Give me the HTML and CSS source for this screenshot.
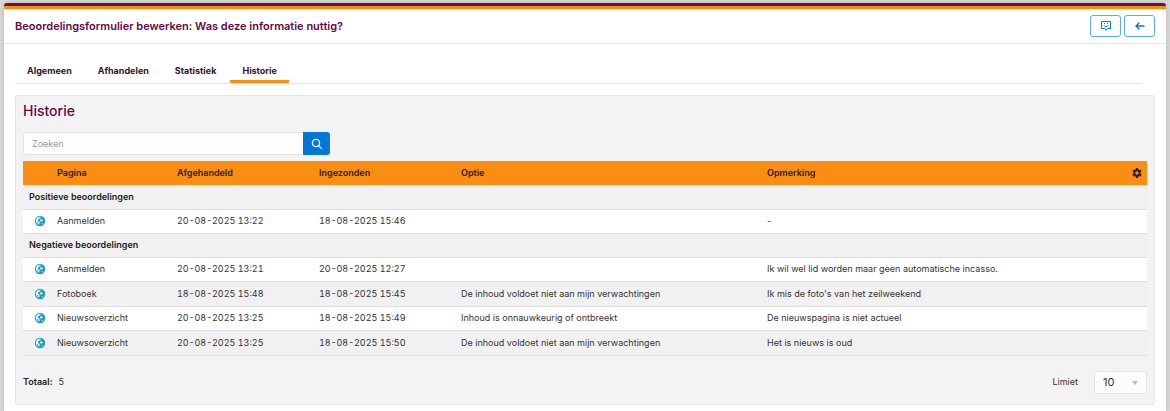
FILE: index.html
```html
<!DOCTYPE html>
<html lang="nl">
<head>
    <meta charset="UTF-8">
    <meta name="viewport" content="width=device-width, initial-scale=1.0">
    <title>Beoordelingsformulier bewerken</title>
    <link rel="stylesheet" href="styles.css">
</head>
<body>
    <!-- Shared icons -->
    <svg class="sprite" aria-hidden="true">
        <symbol id="globe" viewBox="0 0 12 12">
            <circle cx="6" cy="6" r="5.2" fill="#1c9dbd"/>
            <path d="M3.4 2.6C4.4 1.8 6 1.6 7 2L5.6 3.4 4.4 4.2 3.8 5.6 5 6.4 5.8 7.6 5.2 9.6C3 9.6 1.8 7.8 1.8 6 1.8 4.6 2.4 3.4 3.4 2.6Z" fill="#e4f4f8"/>
            <path d="M6 4.8L7.6 4 8.8 5.2 8.4 6.6 7.2 6.2 6.2 6.4ZM7.4 8.8L9.2 8.2 8.6 9.4Z" fill="#e4f4f8"/>
            <path d="M2.8 6.8L4.2 7.2 4.4 8.8 3.4 8.6Z" fill="#1c9dbd"/>
        </symbol>
    </svg>

    <div class="window">
        <header class="header">
            <h1>Beoordelingsformulier bewerken: Was deze informatie nuttig?</h1>
            <div class="actions">
                <button type="button" class="action" aria-label="Feedback">
                    <svg width="12" height="12" viewBox="0 0 12 12" fill="none" stroke="currentColor">
                        <path d="M1.5 1.5H10.5V8.5H7.4L6 10.4 4.6 8.5H1.5Z" stroke-linejoin="round"/>
                        <path d="M3.8 5.4C4.6 7 7.4 7 8.2 5.4"/>
                        <path d="M4.5 3V4.2M7.5 3V4.2"/>
                    </svg>
                </button>
                <button type="button" class="action" aria-label="Terug">
                    <svg width="12" height="12" viewBox="0 0 12 12" fill="none" stroke="currentColor" stroke-width="1.4" stroke-linecap="round" stroke-linejoin="round">
                        <path d="M10 6H2M5 3L2 6 5 9"/>
                    </svg>
                </button>
            </div>
        </header>

        <nav class="tabs">
            <a href="#algemeen">Algemeen</a>
            <a href="#afhandelen">Afhandelen</a>
            <a href="#statistiek">Statistiek</a>
            <a href="#historie" class="active">Historie</a>
        </nav>

        <section class="panel" id="historie">
            <h2>Historie</h2>
            <form class="search">
                <input type="text" placeholder="Zoeken" aria-label="Zoeken">
                <button type="button" aria-label="Zoek">
                    <svg width="12" height="12" viewBox="0 0 12 12" fill="none" stroke="currentColor" stroke-width="1.3" stroke-linecap="round">
                        <circle cx="5" cy="5" r="3.6"/>
                        <path d="M7.7 7.7L10.6 10.6"/>
                    </svg>
                </button>
            </form>

            <table>
                <colgroup>
                    <col class="col-icon">
                    <col class="col-page">
                    <col class="col-date">
                    <col class="col-date">
                    <col class="col-option">
                    <col>
                    <col class="col-settings">
                </colgroup>
                <thead>
                    <tr>
                        <th></th>
                        <th>Pagina</th>
                        <th>Afgehandeld</th>
                        <th>Ingezonden</th>
                        <th>Optie</th>
                        <th>Opmerking</th>
                        <th class="settings">
                            <svg width="10" height="10" viewBox="0 0 10 10">
                                <path fill="#2b2420" fill-rule="evenodd" d="M4 0H6L6.3 1.3 7.3 1.9 8.6 1.4 9.6 3.2 8.6 4.2V5.8L9.6 6.8 8.6 8.6 7.3 8.1 6.3 8.7 6 10H4L3.7 8.7 2.7 8.1 1.4 8.6.4 6.8 1.4 5.8V4.2L.4 3.2 1.4 1.4 2.7 1.9 3.7 1.3ZM5 3.3A1.7 1.7 0 1 0 5 6.7 1.7 1.7 0 1 0 5 3.3Z"/>
                            </svg>
                        </th>
                    </tr>
                </thead>
                <tbody>
                    <tr class="group"><th colspan="7">Positieve beoordelingen</th></tr>
                    <tr>
                        <td><svg class="globe"><use href="#globe"/></svg></td>
                        <td>Aanmelden</td>
                        <td class="date">20-08-2025 13:22</td>
                        <td class="date">18-08-2025 15:46</td>
                        <td></td>
                        <td>-</td>
                        <td></td>
                    </tr>
                </tbody>
                <tbody>
                    <tr class="group"><th colspan="7">Negatieve beoordelingen</th></tr>
                    <tr>
                        <td><svg class="globe"><use href="#globe"/></svg></td>
                        <td>Aanmelden</td>
                        <td class="date">20-08-2025 13:21</td>
                        <td class="date">20-08-2025 12:27</td>
                        <td></td>
                        <td>Ik wil wel lid worden maar geen automatische incasso.</td>
                        <td></td>
                    </tr>
                    <tr class="odd">
                        <td><svg class="globe"><use href="#globe"/></svg></td>
                        <td>Fotoboek</td>
                        <td class="date">18-08-2025 15:48</td>
                        <td class="date">18-08-2025 15:45</td>
                        <td>De inhoud voldoet niet aan mijn verwachtingen</td>
                        <td>Ik mis de foto's van het zeilweekend</td>
                        <td></td>
                    </tr>
                    <tr>
                        <td><svg class="globe"><use href="#globe"/></svg></td>
                        <td>Nieuwsoverzicht</td>
                        <td class="date">20-08-2025 13:25</td>
                        <td class="date">18-08-2025 15:49</td>
                        <td>Inhoud is onnauwkeurig of ontbreekt</td>
                        <td>De nieuwspagina is niet actueel</td>
                        <td></td>
                    </tr>
                    <tr class="odd">
                        <td><svg class="globe"><use href="#globe"/></svg></td>
                        <td>Nieuwsoverzicht</td>
                        <td class="date">20-08-2025 13:25</td>
                        <td class="date">18-08-2025 15:50</td>
                        <td>De inhoud voldoet niet aan mijn verwachtingen</td>
                        <td>Het is nieuws is oud</td>
                        <td></td>
                    </tr>
                </tbody>
            </table>

            <footer class="footer">
                <div class="total"><strong>Totaal:</strong> <span>5</span></div>
                <div class="limit">
                    <label for="limit">Limiet</label>
                    <div class="select">
                        <select id="limit">
                            <option>10</option>
                            <option>25</option>
                            <option>50</option>
                        </select>
                        <svg width="6" height="4" viewBox="0 0 6 4"><path d="M0 0H6L3 4Z" fill="#b9babc"/></svg>
                    </div>
                </div>
            </footer>
        </section>
    </div>
</body>
</html>
```
FILE: styles.css
```css
* {
    box-sizing: border-box;
}
body {
    margin: 0;
    padding: 3px 4px 0;
    min-height: 100vh;
    display: flex;
    background-color: #d6d7d9;
    font-family: Inter, "Liberation Sans", sans-serif;
    font-size: 9px;
    line-height: 14px;
    color: #333;
}
h1, h2 {
    margin: 0;
    color: #5f0a41;
}
button, input, select {
    font-family: inherit;
    font-size: inherit;
    margin: 0;
}
svg {
    display: block;
}
.sprite {
    position: absolute;
    width: 0;
    height: 0;
}
.window {
    flex: 1;
    min-width: 0;
    background-color: #fff;
    border-top: 3px solid #6b0f47;
    border-radius: 3px 3px 0 0;
    padding-bottom: 6px;
    box-shadow: 0 0 4px rgba(0, 0, 0, 0.15);
}
.header {
    display: flex;
    align-items: center;
    justify-content: space-between;
    height: 38px;
    padding: 0 11px;
    border-top: 3px solid #f98e12;
    border-bottom: 1px solid #e6e6e6;
}
.header h1 {
    font-size: 11px;
    font-weight: 600;
    line-height: 16px;
}
.actions {
    display: flex;
    gap: 3px;
}
.action {
    display: flex;
    align-items: center;
    justify-content: center;
    width: 31px;
    height: 22px;
    padding: 0;
    background-color: #fff;
    border: 1px solid #5fabea;
    border-radius: 3px;
    color: #0b78d8;
    cursor: pointer;
}
.tabs {
    display: flex;
    gap: 2px;
    margin: 14px 24px 0 11px;
    border-bottom: 1px solid #e6e6e6;
}
.tabs a {
    padding: 6px 12px 2px;
    border-bottom: 3px solid transparent;
    color: #33121f;
    font-weight: 700;
    text-decoration: none;
}
.tabs a.active {
    border-bottom-color: #f98e12;
    border-radius: 1px;
}
.panel {
    margin: 11px 11px 0;
    padding: 6px 7px 10px;
    background-color: #f3f3f3;
    border: 1px solid #e4e4e4;
    border-radius: 3px;
}
.panel h2 {
    font-size: 14px;
    font-weight: 500;
    line-height: 18px;
}
.search {
    display: flex;
    width: 307px;
    height: 23px;
    margin: 12px 0 6px;
}
.search input {
    flex: 1;
    min-width: 0;
    padding: 0 8px;
    background-color: #fdfdfd;
    border: 1px solid #e2e4e6;
    border-right: none;
    border-radius: 3px 0 0 3px;
}
.search input::placeholder {
    color: #999;
}
.search button {
    display: flex;
    align-items: center;
    justify-content: center;
    width: 27px;
    padding: 0;
    background-color: #0377d9;
    border: none;
    border-radius: 0 3px 3px 0;
    color: #fff;
    cursor: pointer;
}
table {
    width: 100%;
    table-layout: fixed;
    border-collapse: collapse;
}
.col-icon {
    width: 28px;
}
.col-page {
    width: 120px;
}
.col-date {
    width: 142px;
}
.col-option {
    width: 306px;
}
.col-settings {
    width: 26px;
}
th, td {
    height: 24px;
    padding: 0 6px;
    text-align: left;
    white-space: nowrap;
}
th {
    color: #222;
    font-weight: 600;
}
thead th {
    background-color: #f98e12;
}
tbody tr {
    background-color: #fff;
    border-bottom: 1px solid #dedede;
}
tbody tr.group,
tbody tr.odd {
    background-color: #f1f1f1;
}
.odd td {
    height: 25px;
}
.settings svg {
    margin-left: 5px;
}
.globe {
    width: 12px;
    height: 12px;
    margin-left: 5px;
}
.date {
    font-variant-numeric: tabular-nums;
}
.footer {
    display: flex;
    align-items: center;
    justify-content: space-between;
    margin-top: 15px;
}
.total {
    display: flex;
    gap: 6px;
}
.total strong {
    color: #222;
    font-weight: 600;
}
.limit {
    display: flex;
    align-items: center;
    gap: 16px;
}
.select {
    position: relative;
}
.select select {
    appearance: none;
    width: 53px;
    height: 23px;
    padding: 0 8px;
    background-color: #fcfcfc;
    border: 1px solid #e2e4e6;
    border-radius: 3px;
    color: #333;
    font-size: 11px;
}
/* Dropdown arrow on top of the select */
.select svg {
    position: absolute;
    top: 10px;
    right: 9px;
    pointer-events: none;
}
```
